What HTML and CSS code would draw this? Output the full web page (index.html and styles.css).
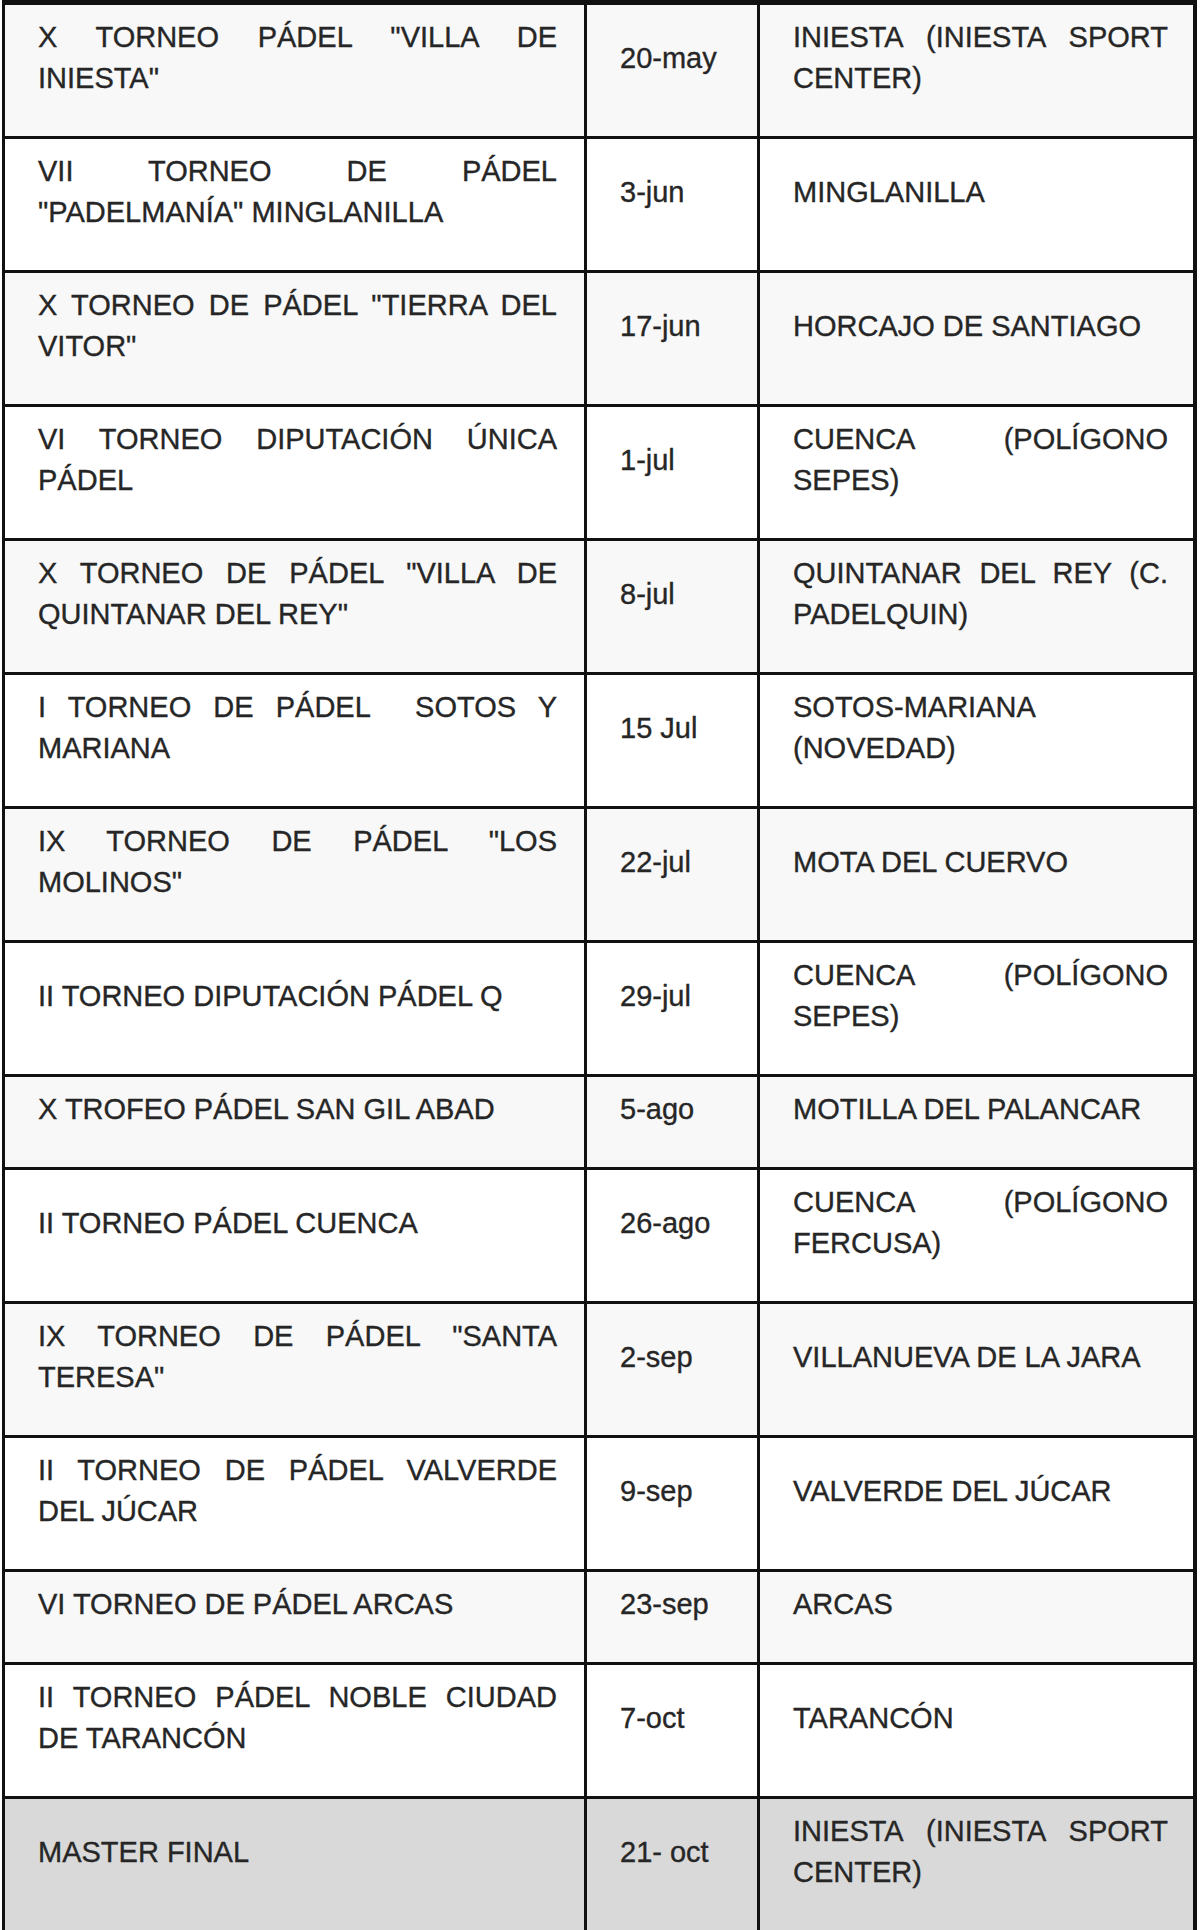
FILE: index.html
```html
<!DOCTYPE html>
<html lang="es">
<head>
<meta charset="utf-8">
<title>Circuito de Pádel</title>
<link rel="stylesheet" href="styles.css">
</head>
<body>
<div class="schedule" role="table">
  <div class="row alt" role="row"><div class="cell name">X TORNEO PÁDEL "VILLA DE INIESTA"</div><div class="cell date">20-may</div><div class="cell place">INIESTA (INIESTA SPORT CENTER)</div></div>
  <div class="row" role="row"><div class="cell name">VII TORNEO DE PÁDEL "PADELMANÍA" MINGLANILLA</div><div class="cell date">3-jun</div><div class="cell place">MINGLANILLA</div></div>
  <div class="row alt" role="row"><div class="cell name">X TORNEO DE PÁDEL "TIERRA DEL VITOR"</div><div class="cell date">17-jun</div><div class="cell place">HORCAJO DE SANTIAGO</div></div>
  <div class="row" role="row"><div class="cell name">VI TORNEO DIPUTACIÓN ÚNICA PÁDEL</div><div class="cell date">1-jul</div><div class="cell place">CUENCA (POLÍGONO SEPES)</div></div>
  <div class="row alt" role="row"><div class="cell name">X TORNEO DE PÁDEL "VILLA DE QUINTANAR DEL REY"</div><div class="cell date">8-jul</div><div class="cell place">QUINTANAR DEL REY (C. PADELQUIN)</div></div>
  <div class="row" role="row"><div class="cell name">I TORNEO DE PÁDEL&nbsp; SOTOS Y MARIANA</div><div class="cell date">15 Jul</div><div class="cell place">SOTOS-MARIANA (NOVEDAD)</div></div>
  <div class="row alt" role="row"><div class="cell name">IX TORNEO DE PÁDEL "LOS MOLINOS"</div><div class="cell date">22-jul</div><div class="cell place">MOTA DEL CUERVO</div></div>
  <div class="row" role="row"><div class="cell name">II TORNEO DIPUTACIÓN PÁDEL Q</div><div class="cell date">29-jul</div><div class="cell place">CUENCA (POLÍGONO SEPES)</div></div>
  <div class="row alt" role="row"><div class="cell name">X TROFEO PÁDEL SAN GIL ABAD</div><div class="cell date">5-ago</div><div class="cell place">MOTILLA DEL PALANCAR</div></div>
  <div class="row" role="row"><div class="cell name">II TORNEO PÁDEL CUENCA</div><div class="cell date">26-ago</div><div class="cell place">CUENCA (POLÍGONO FERCUSA)</div></div>
  <div class="row alt" role="row"><div class="cell name">IX TORNEO DE PÁDEL "SANTA TERESA"</div><div class="cell date">2-sep</div><div class="cell place">VILLANUEVA DE LA JARA</div></div>
  <div class="row" role="row"><div class="cell name">II TORNEO DE PÁDEL VALVERDE DEL JÚCAR</div><div class="cell date">9-sep</div><div class="cell place">VALVERDE DEL JÚCAR</div></div>
  <div class="row alt" role="row"><div class="cell name">VI TORNEO DE PÁDEL ARCAS</div><div class="cell date">23-sep</div><div class="cell place">ARCAS</div></div>
  <div class="row" role="row"><div class="cell name">II TORNEO PÁDEL NOBLE CIUDAD DE TARANCÓN</div><div class="cell date">7-oct</div><div class="cell place">TARANCÓN</div></div>
  <div class="row final" role="row"><div class="cell name">MASTER FINAL</div><div class="cell date">21- oct</div><div class="cell place">INIESTA (INIESTA SPORT CENTER)</div></div>
</div>
</body>
</html>
```

FILE: styles.css
```css
html, body {
  margin: 0;
  padding: 0;
  background: #ffffff;
}

body {
  font-family: "Liberation Sans", Arial, sans-serif;
  font-size: 29px;
  line-height: 41px;
  color: #262626;
}

.schedule {
  display: grid;
  grid-template-columns: 579px 170px 433px;
  gap: 3px;
  width: max-content;
  margin-left: 2px;
  background: #111111;
  border-top: 5px solid #111111;
  border-left: 3px solid #111111;
  border-right: 4px solid #111111;
  border-bottom: 3px solid #111111;
}

.row {
  display: contents;
}

.cell {
  display: flex;
  flex-direction: column;
  justify-content: center;
  padding: 12px 27px 37px 33px;
  background: #ffffff;
  text-align: justify;
  -webkit-text-stroke: 0.35px #262626;
}

.cell.place {
  padding-right: 25px;
}

.cell.date {
  text-align: left;
}

.row.alt .cell {
  background: #f8f8f8;
}

.row.final .cell {
  background: #d9d9d9;
}
```
